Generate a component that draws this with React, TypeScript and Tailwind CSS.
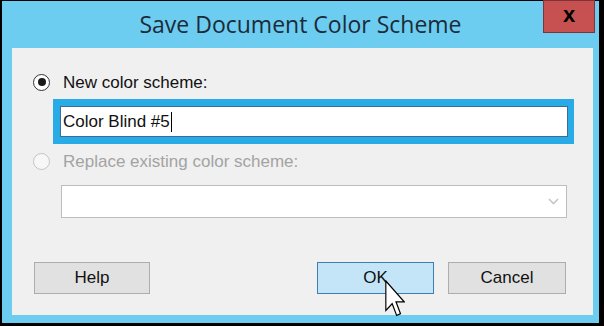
export default function App() {
  const ui = { fontFamily: '"Liberation Sans", Arial, sans-serif' };

  return (
    <div className="relative h-[326px] w-[604px] overflow-hidden bg-black" style={ui}>
      {/* window frame */}
      <div className="ml-[2px] mt-[1px] flex h-[322px] w-[597px] flex-col bg-[#6ccdf0]">
        {/* title bar */}
        <div className="relative flex h-[47px] shrink-0 items-center justify-center">
          <span
            className="text-[23px] leading-none text-[#1c2b3a]"
            style={{ fontFamily: '"Open Sans", "Noto Sans", sans-serif' }}
          >
            Save Document Color Scheme
          </span>
          <div className="absolute right-[4px] top-[-1px] flex h-[33px] w-[52px] items-center justify-center border border-[#7d3434] bg-[#c75050]">
            <span className="mt-[-3px] text-[22px] font-bold leading-none text-black">x</span>
          </div>
        </div>

        {/* client area */}
        <div className="ml-[10px] mr-[6px] flex h-[267px] flex-col bg-[#f0f0f0] text-[17px]">
          {/* new scheme radio */}
          <div className="mt-[24px] flex h-[20px] items-center pl-[21px]">
            <div className="flex h-[17px] w-[17px] items-center justify-center rounded-full border border-[#333] bg-white">
              <div className="h-[8px] w-[8px] rounded-full bg-[#1a1a1a]" />
            </div>
            <span className="ml-[13px] leading-none text-[#111]">New color scheme:</span>
          </div>

          {/* focused text box */}
          <div className="ml-[41px] mt-[7px] flex h-[45px] w-[521px] bg-[#29abe8] p-[7px] pr-[6px]">
            <div className="flex flex-1 items-center border border-[#3d6b92] bg-white pl-[2px]">
              <span className="leading-none text-[#111]">Color Blind #5</span>
              <span className="ml-[1px] h-[20px] w-[1px] bg-black" />
            </div>
          </div>

          {/* replace radio (disabled) */}
          <div className="mt-[7px] flex h-[20px] items-center pl-[21px]">
            <div className="h-[17px] w-[17px] rounded-full border border-[#c4c4c4] bg-[#f7f7f7]" />
            <span className="ml-[13px] leading-none text-[#a3a3a3]">Replace existing color scheme:</span>
          </div>

          {/* disabled dropdown */}
          <div className="ml-[49px] mt-[14px] flex h-[33px] w-[506px] items-center justify-end border border-[#bdbdbd] bg-white pr-[7px]">
            <svg width="11" height="7" viewBox="0 0 11 7">
              <path d="M1 1 L5.5 5.5 L10 1" fill="none" stroke="#c6c6c6" strokeWidth="1.6" />
            </svg>
          </div>

          {/* buttons */}
          <div className="mt-[44px] flex pl-[22px]">
            <div className="flex h-[32px] w-[116px] items-center justify-center border border-[#adadad] bg-[#e1e1e1] text-[#111]">
              Help
            </div>
            <div className="ml-[167px] flex h-[32px] w-[117px] items-center justify-center border border-[#3c7fb1] bg-[#c4e5f8] text-[#111]">
              OK
            </div>
            <div className="ml-[14px] flex h-[32px] w-[118px] items-center justify-center border border-[#adadad] bg-[#e1e1e1] text-[#111]">
              Cancel
            </div>
          </div>
        </div>
      </div>

      {/* mouse pointer */}
      <svg
        className="absolute left-[385px] top-[280px]"
        width="20"
        height="37"
        viewBox="0 0 12 20"
        preserveAspectRatio="none"
      >
        <path
          d="M0.5 0.5 L0.5 16.5 L4.3 12.8 L7 19.2 L9.3 18.2 L6.6 11.8 L11.5 11.8 Z"
          fill="white"
          stroke="black"
          strokeWidth="0.7"
          strokeLinejoin="miter"
        />
      </svg>
    </div>
  );
}
